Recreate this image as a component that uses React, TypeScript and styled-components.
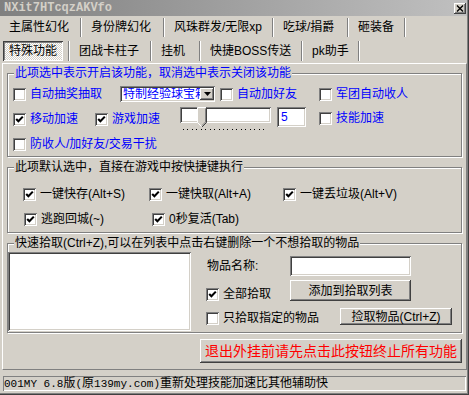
import React from 'react';
import styled, { createGlobalStyle } from 'styled-components';

const FONT = `"Liberation Sans", "Noto Sans CJK SC", sans-serif`;

const GlobalStyle = createGlobalStyle`
  html, body { margin: 0; padding: 0; background: #d4d0c8; }
  body { font-family: ${FONT}; font-size: 12px; }
  * { box-sizing: border-box; }
`;

const sunken = `box-shadow: inset 1px 1px #808080, inset -1px -1px #fff, inset 2px 2px #404040, inset -2px -2px #d4d0c8;`;
const raised = `box-shadow: inset -1px -1px #404040, inset 1px 1px #fff, inset -2px -2px #808080, inset 2px 2px #d4d0c8;`;

const Window = styled.div`
  width: 469px;
  height: 395px;
  background: #d4d0c8;
  display: flex;
  flex-direction: column;
  box-shadow: inset -1px -1px #404040, inset -2px -2px #808080;
  font-family: ${FONT};
  font-size: 12px;
  line-height: 12px;
  color: #000;
  overflow: hidden;
`;

const TitleBar = styled.div`
  height: 16px;
  flex: none;
  margin-right: 2px;
  background: linear-gradient(to right, #808080, #c0c0c0);
  display: flex;
  align-items: center;
  justify-content: space-between;
  padding: 0 1px 0 4px;
`;

const TitleText = styled.span`
  font-family: "Liberation Mono", monospace;
  font-weight: bold;
  font-size: 12px;
  color: #d4d0c8;
  white-space: nowrap;
`;

const CloseButton = styled.div`
  width: 12px;
  height: 11px;
  background: #d4d0c8;
  ${raised}
  display: flex;
  align-items: center;
  justify-content: center;
`;

const TabRow = styled.div<{ $h: number }>`
  height: ${p => p.$h}px;
  flex: none;
  display: flex;
  align-items: center;
`;

const Tab = styled.div<{ $w: number }>`
  width: ${p => p.$w}px;
  flex: none;
  padding-left: 9px;
  white-space: nowrap;
`;

const ActiveTab = styled.div`
  width: 60px;
  height: 20px;
  flex: none;
  margin: 0 5px 0 3px;
  padding-left: 6px;
  display: flex;
  align-items: center;
  white-space: nowrap;
  background: repeating-conic-gradient(#ffffff 0 25%, #d4d0c8 0 50%) 0 0 / 2px 2px;
  box-shadow: inset 1px 1px #404040, inset -1px -1px #fff, inset 2px 2px #808080;
`;

const TabSep = styled.div<{ $h: number }>`
  width: 2px;
  height: ${p => p.$h}px;
  flex: none;
  border-left: 1px solid #808080;
  border-right: 1px solid #fff;
`;

const Panel = styled.div`
  margin: 0 2px;
  border-top: 1px solid #fff;
  border-left: 1px solid #fff;
  border-right: 1px solid #808080;
  border-bottom: 1px solid #808080;
  padding: 3px 0 6px 0;
  display: flex;
  flex-direction: column;
  flex: none;
`;

const Group = styled.fieldset<{ $mt?: number }>`
  margin: ${p => p.$mt ?? 0}px 4px 0 4px;
  padding: 0;
  min-width: 0;
  border: 1px solid #808080;
  box-shadow: 1px 1px 0 #fff, inset 1px 1px 0 #fff;
`;

const Legend = styled.legend<{ $blue?: boolean }>`
  margin-left: 6px;
  padding: 0 1px;
  height: 12px;
  line-height: 12px;
  background: #d4d0c8;
  white-space: nowrap;
  color: ${p => (p.$blue ? '#0000ff' : '#000')};
`;

const Body = styled.div<{ $pt: number; $pb: number; $pl: number }>`
  padding: ${p => p.$pt}px 0 ${p => p.$pb}px ${p => p.$pl}px;
  display: flex;
  flex-direction: column;
`;

const Row = styled.div<{ $h: number; $mt?: number; $align?: string; $pl?: number }>`
  height: ${p => p.$h}px;
  margin-top: ${p => p.$mt ?? 0}px;
  padding-left: ${p => p.$pl ?? 0}px;
  display: flex;
  align-items: ${p => p.$align ?? 'center'};
`;

const CheckItem = styled.label<{ $w?: number; $dy?: number; $ml?: number }>`
  display: flex;
  align-items: center;
  gap: 4px;
  flex: none;
  width: ${p => (p.$w ? `${p.$w}px` : 'auto')};
  margin-top: ${p => p.$dy ?? 0}px;
  margin-left: ${p => p.$ml ?? 0}px;
`;

const Box = styled.span`
  width: 13px;
  height: 13px;
  flex: none;
  background: #fff;
  ${sunken}
  display: flex;
  align-items: center;
  justify-content: center;
`;

const Label = styled.span<{ $blue?: boolean }>`
  color: ${p => (p.$blue ? '#0000ff' : '#000')};
  white-space: nowrap;
  line-height: 13px;
`;

const Combo = styled.div`
  width: 95px;
  height: 16px;
  flex: none;
  background: #fff;
  ${sunken}
  display: flex;
  align-items: center;
  padding: 2px 1px 2px 3px;
  overflow: hidden;
`;

const ComboText = styled.span`
  flex: 1;
  overflow: hidden;
  white-space: nowrap;
  color: #0000ff;
`;

const ComboButton = styled.span`
  width: 14px;
  height: 12px;
  flex: none;
  background: #d4d0c8;
  ${raised}
  display: flex;
  align-items: center;
  justify-content: center;
`;

const Slider = styled.div`
  position: relative;
  width: 91px;
  height: 24px;
  flex: none;
  display: flex;
  flex-direction: column;
`;

const Channel = styled.div`
  height: 16px;
  background: #fff;
  ${sunken}
`;

const Ticks = styled.div`
  height: 1px;
  margin: 6px 3px 0 3px;
  background: repeating-linear-gradient(to right, #000 0 1px, transparent 1px 4.45px);
`;

const Thumb = styled.svg`
  position: absolute;
  left: 17px;
  top: 0;
`;

const Edit = styled.div<{ $w: number; $h: number; $ml?: number }>`
  width: ${p => p.$w}px;
  height: ${p => p.$h}px;
  margin-left: ${p => p.$ml ?? 0}px;
  flex: none;
  background: #fff;
  ${sunken}
  color: #0000ff;
  padding: 4px 0 0 4px;
`;

const ListBox = styled.div`
  width: 183px;
  height: 79px;
  margin-top: 3px;
  flex: none;
  background: #fff;
  ${sunken}
`;

const RightCol = styled.div`
  margin-left: 15px;
  padding-top: 7px;
  display: flex;
  flex-direction: column;
`;

const FieldLabel = styled.span`
  width: 84px;
  flex: none;
  padding-left: 1px;
  white-space: nowrap;
`;

const Button = styled.div<{ $w: number; $h: number; $red?: boolean }>`
  width: ${p => p.$w}px;
  height: ${p => p.$h}px;
  flex: none;
  background: #d4d0c8;
  ${raised}
  display: flex;
  align-items: center;
  justify-content: center;
  white-space: nowrap;
  color: ${p => (p.$red ? '#ff0000' : '#000')};
  font-size: ${p => (p.$red ? 14 : 12)}px;
  line-height: ${p => (p.$red ? 14 : 12)}px;
`;

const ButtonRow = styled.div`
  margin: 6px 4px 0 4px;
  display: flex;
  justify-content: flex-end;
`;

const StatusBar = styled.div`
  margin: 6px 3px 0 3px;
  height: 15px;
  flex: none;
  box-shadow: inset 1px 1px #808080, inset -1px -1px #fff;
  padding: 2px 0 0 1px;
  font-family: "Liberation Mono", "Noto Sans CJK SC", monospace;
  font-size: 12px;
  line-height: 12px;
  white-space: nowrap;
`;

const Latin = styled.span`
  font-size: 11px;
`;

const CheckMark = () => (
  <svg width="9" height="9" viewBox="0 0 9 9">
    <polyline points="1.2,4 3.4,6.3 7.8,1.6" fill="none" stroke="#000" strokeWidth="2.1" />
  </svg>
);

type CheckProps = { label: string; checked?: boolean; blue?: boolean; w?: number; dy?: number; ml?: number };
const Check = ({ label, checked, blue, w, dy, ml }: CheckProps) => (
  <CheckItem $w={w} $dy={dy} $ml={ml}>
    <Box>{checked && <CheckMark />}</Box>
    <Label $blue={blue}>{label}</Label>
  </CheckItem>
);

const row1: [string, number][] = [
  ['主属性幻化', 80],
  ['身份牌幻化', 81],
  ['风珠群发/无限xp', 107],
  ['吃球/捐爵', 73],
  ['砸装备', 55],
];

const row2: [string, number][] = [
  ['团战卡柱子', 80],
  ['挂机', 47],
  ['快捷BOSS传送', 100],
  ['pk助手', 55],
];

export default function App() {
  return (
    <>
      <GlobalStyle />
      <Window>
        <TitleBar>
          <TitleText>NXit7HTcqzAKVfo</TitleText>
          <CloseButton>
            <svg width="8" height="7" viewBox="0 0 8 7">
              <path d="M1 0.5 L7 6.5 M7 0.5 L1 6.5" stroke="#000" strokeWidth="1.4" />
            </svg>
          </CloseButton>
        </TitleBar>

        <TabRow $h={22}>
          {row1.map(([t, w]) => (
            <React.Fragment key={t}>
              <Tab $w={w}>{t}</Tab>
              <TabSep $h={19} />
            </React.Fragment>
          ))}
        </TabRow>
        <TabRow $h={25}>
          <ActiveTab>特殊功能</ActiveTab>
          <TabSep $h={20} />
          {row2.map(([t, w]) => (
            <React.Fragment key={t}>
              <Tab $w={w}>{t}</Tab>
              <TabSep $h={20} />
            </React.Fragment>
          ))}
        </TabRow>

        <Panel>
          <Group>
            <Legend $blue>此项选中表示开启该功能，取消选中表示关闭该功能</Legend>
            <Body $pt={7} $pb={4} $pl={5}>
              <Row $h={16}>
                <Check label="自动抽奖抽取" blue w={107} />
                <Combo>
                  <ComboText>特制经验球宝箱</ComboText>
                  <ComboButton>
                    <svg width="7" height="4" viewBox="0 0 7 4">
                      <path d="M0 0 H7 L3.5 4 Z" fill="#000" />
                    </svg>
                  </ComboButton>
                </Combo>
                <Check label="自动加好友" blue w={99} ml={5} />
                <Check label="军团自动收人" blue />
              </Row>
              <Row $h={24} $mt={5} $align="flex-start">
                <Check label="移动加速" blue checked w={82} dy={6} />
                <Check label="游戏加速" blue checked w={85} dy={6} />
                <Slider>
                  <Channel />
                  <Ticks />
                  <Thumb width="10" height="21" viewBox="0 0 10 21">
                    <path d="M0.5 0.5 H9.5 V15.5 L5 20 L0.5 15.5 Z" fill="#d4d0c8" />
                    <path d="M0.5 15.5 V0.5 H9" stroke="#fff" fill="none" />
                    <path d="M9.5 0.5 V15.5 L5 20" stroke="#404040" fill="none" />
                    <path d="M0.5 15.5 L4.5 19.5" stroke="#fff" fill="none" />
                    <path d="M8.5 1.5 V15 L5 18.5" stroke="#808080" fill="none" />
                  </Thumb>
                </Slider>
                <Edit $w={29} $h={20} $ml={6}>5</Edit>
                <Check label="技能加速" blue ml={13} dy={5} />
              </Row>
              <Row $h={16} $mt={5}>
                <Check label="防收人/加好友/交易干扰" blue />
              </Row>
            </Body>
          </Group>

          <Group $mt={4}>
            <Legend>此项默认选中，直接在游戏中按快捷键执行</Legend>
            <Body $pt={13} $pb={5} $pl={15}>
              <Row $h={16}>
                <Check label="一键快存(Alt+S)" checked w={126} />
                <Check label="一键快取(Alt+A)" checked w={134} />
                <Check label="一键丢垃圾(Alt+V)" checked />
              </Row>
              <Row $h={16} $mt={9} $pl={1}>
                <Check label="逃跑回城(~)" checked w={128} />
                <Check label="0秒复活(Tab)" checked />
              </Row>
            </Body>
          </Group>

          <Group $mt={4}>
            <Legend>快速拾取(Ctrl+Z),可以在列表中点击右键删除一个不想拾取的物品</Legend>
            <Body $pt={0} $pb={1} $pl={0}>
              <Row $h={82} $align="flex-start">
                <ListBox />
                <RightCol>
                  <Row $h={20}>
                    <FieldLabel>物品名称:</FieldLabel>
                    <Edit $w={121} $h={20} />
                  </Row>
                  <Row $h={21} $mt={4} $align="flex-end">
                    <Check label="全部拾取" checked w={84} />
                    <Button $w={121} $h={21}>添加到拾取列表</Button>
                  </Row>
                  <Row $h={17} $mt={7} $align="flex-end">
                    <Check label="只拾取指定的物品" w={134} />
                    <Button $w={112} $h={17}>捡取物品(Ctrl+Z)</Button>
                  </Row>
                </RightCol>
              </Row>
            </Body>
          </Group>

          <ButtonRow>
            <Button $w={262} $h={24} $red>退出外挂前请先点击此按钮终止所有功能</Button>
          </ButtonRow>
        </Panel>

        <StatusBar>
          <Latin>001MY 6.8</Latin>版<Latin>(</Latin>原<Latin>139my.com)</Latin>重新处理技能加速比其他辅助快
        </StatusBar>
      </Window>
    </>
  );
}
